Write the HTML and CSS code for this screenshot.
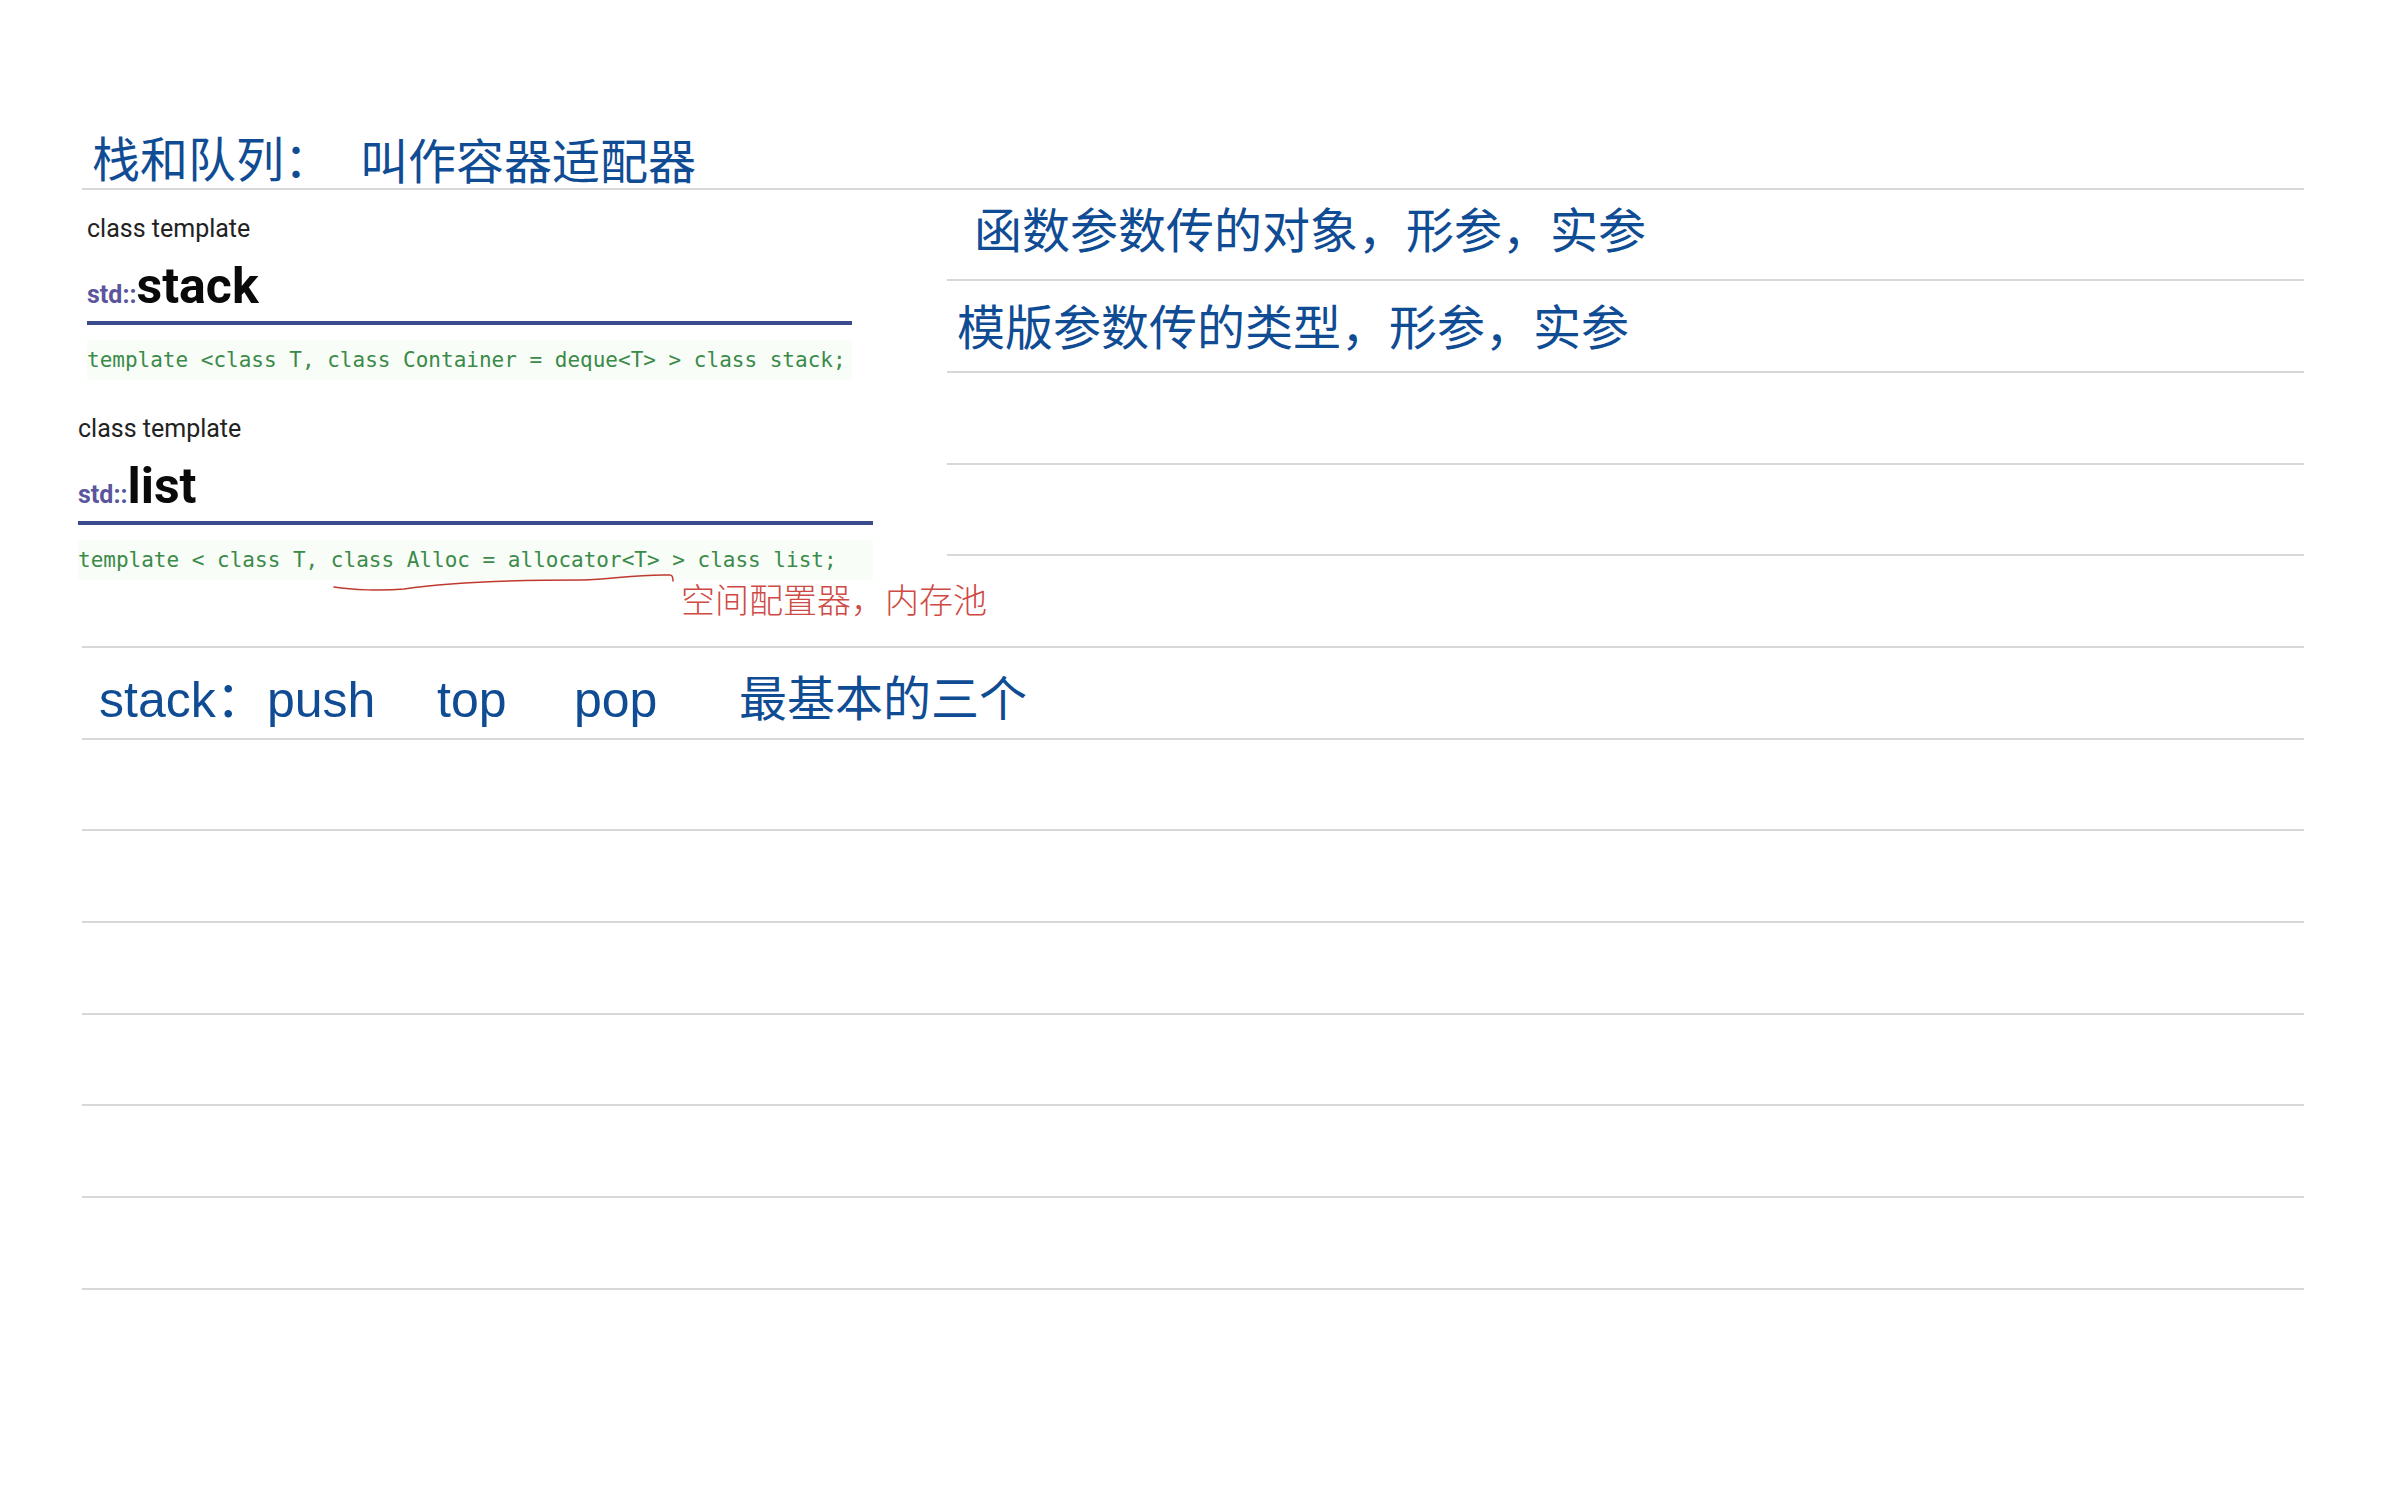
FILE: index.html
```html
<!DOCTYPE html>
<html lang="zh-CN">
<head>
<meta charset="utf-8">
<title>栈和队列</title>
<link rel="stylesheet" href="styles.css">
</head>
<body>
<main class="page">
  <div class="row title-row">
    <span class="note title-a">栈和队列&#xFF1A;</span><span class="note title-b">叫作容器适配器</span>
  </div>
  <section class="middle">
    <div class="clips">
      <article class="clip clip-stack">
        <p class="kind">class template</p>
        <h2 class="heading"><span class="ns">std::</span>stack</h2>
        <code class="decl">template &lt;class T, class Container = deque&lt;T&gt; &gt; class stack;</code>
      </article>
      <article class="clip clip-list">
        <p class="kind">class template</p>
        <h2 class="heading"><span class="ns">std::</span>list</h2>
        <code class="decl">template &lt; class T, class Alloc = allocator&lt;T&gt; &gt; class list;</code>
      </article>
    </div>
    <div class="side">
      <div class="row side-row"><span class="note side-one">函数参数传的对象&#xFF0C;形参&#xFF0C;实参</span></div>
      <div class="row side-row"><span class="note side-two">模版参数传的类型&#xFF0C;形参&#xFF0C;实参</span></div>
      <div class="row side-row"></div>
      <div class="row side-row"></div>
    </div>
    <svg class="ink-line" width="360" height="30" viewBox="0 0 360 30" aria-hidden="true">
      <path d="M2 15C20 18 50 19 72 17C120 10 190 8 250 8C280 8 300 2 338 3C340 3 341 6 341 9" fill="none" stroke="#c0392f" stroke-width="1.5" stroke-linecap="round"/>
    </svg>
    <span class="ink-text">空间配置器&#xFF0C;内存池</span>
  </section>
  <div class="row stack-row">
    <span class="note op-name">stack&#xFF1A;</span><span class="note op-push">push</span><span class="note op-top">top</span><span class="note op-pop">pop</span><span class="note op-desc">最基本的三个</span>
  </div>
  <div class="row"></div>
  <div class="row"></div>
  <div class="row"></div>
  <div class="row"></div>
  <div class="row"></div>
  <div class="row"></div>
</main>
</body>
</html>
```

FILE: styles.css
```css
html, body {
  margin: 0;
  padding: 0;
  background: #fff;
}

.page {
  width: 2222px;
  height: 1491px;
  margin-left: 82px;
  padding-top: 98px;
  box-sizing: border-box;
  font-family: "Liberation Sans", "Noto Sans CJK SC", sans-serif;
}

.row {
  height: 91.67px;
  box-sizing: border-box;
  border-bottom: 2px solid #d8d8d8;
  display: flex;
  align-items: center;
}

.note {
  font-size: 48px;
  line-height: 64px;
  color: #0f4c94;
  white-space: nowrap;
}

.title-row {
  align-items: flex-end;
}

.title-a {
  margin-left: 10px;
  width: 268px;
  margin-bottom: -5px;
}

.title-b {
  margin-bottom: -7px;
}

.middle {
  position: relative;
  display: flex;
  height: 458.35px;
  box-sizing: border-box;
  border-bottom: 2px solid #d8d8d8;
}

.clips {
  width: 865px;
  flex: none;
}

.side {
  flex: 1;
}

.side-row {
  padding-bottom: 4px;
}

.side-row:nth-child(2) {
  padding-top: 6px;
  padding-bottom: 0;
}

.side-one {
  margin-left: 27px;
}

.side-two {
  margin-left: 10px;
}

.clip {
  display: flex;
  flex-direction: column;
  align-items: flex-start;
}

.clip-stack {
  padding: 19px 0 0 5px;
  width: 765px;
}

.clip-list {
  margin-top: 29px;
  margin-left: -4px;
  width: 795px;
}

.kind {
  margin: 0;
  font-family: Roboto, sans-serif;
  font-size: 25px;
  line-height: 40px;
  color: #222;
}

.heading {
  margin: 9px 0 0;
  width: 100%;
  height: 67px;
  box-sizing: border-box;
  border-bottom: 4px solid #3b4a8c;
  font-family: Roboto, sans-serif;
  font-size: 50px;
  line-height: 56px;
  font-weight: 700;
  color: #0a0a0a;
}

.ns {
  font-size: 25px;
  color: #5a559c;
}

.decl {
  display: block;
  width: 100%;
  margin-top: 15px;
  padding: 6px 0;
  font-family: "DejaVu Sans Mono", monospace;
  font-size: 21px;
  line-height: 28px;
  color: #3a8a48;
  background: #f9fdf8;
  white-space: pre;
}

.stack-row {
  padding-top: 15px;
}

.op-name {
  margin-left: 17px;
  width: 168px;
  font-size: 50px;
}

.op-push {
  width: 170px;
  font-size: 50px;
}

.op-top {
  width: 137px;
  font-size: 50px;
}

.op-pop {
  width: 165px;
  font-size: 50px;
}

.ink-line {
  position: absolute;
  left: 250px;
  top: 382px;
}

.ink-text {
  position: absolute;
  left: 599px;
  top: 386px;
  font-size: 34px;
  line-height: 46px;
  color: #cf4a44;
  white-space: nowrap;
  font-family: "Noto Sans CJK SC", sans-serif;
  font-weight: 300;
}
```
